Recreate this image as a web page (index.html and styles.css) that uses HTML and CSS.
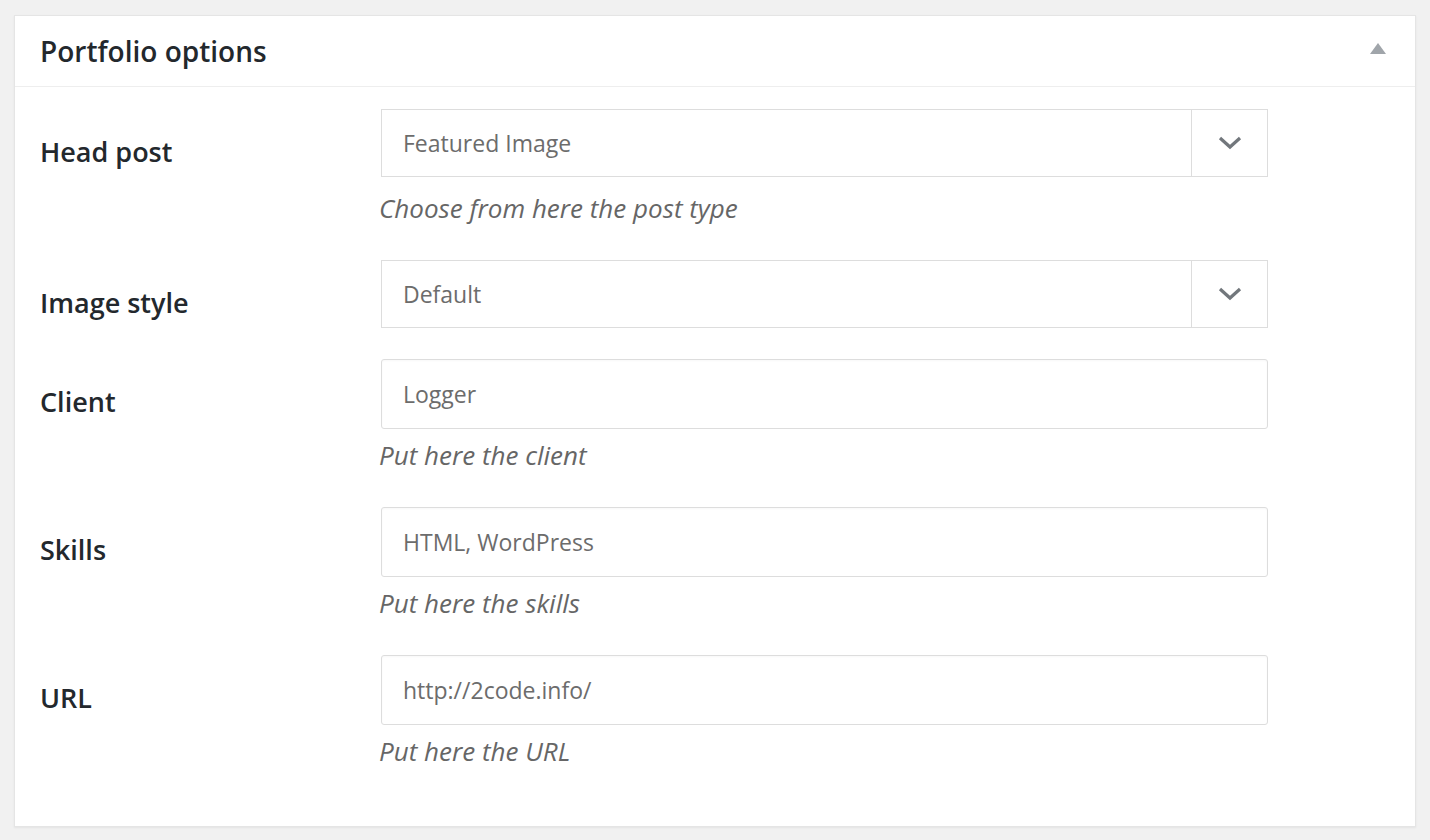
FILE: index.html
```html
<!DOCTYPE html>
<html>
<head>
<meta charset="utf-8">
<link rel="stylesheet" href="styles.css">
</head>
<body>
<div class="panel">
  <div class="panel-head">
    <h2 class="panel-title">Portfolio options</h2>
    <svg class="toggle" width="16" height="11" viewBox="0 0 16 11"><polygon points="8,0 16,11 0,11" fill="#a0a5aa"/></svg>
  </div>
  <div class="panel-body">
    <div class="row">
      <div class="label">Head post</div>
      <div class="field">
        <div class="select"><span class="value">Featured Image</span><span class="arrow"><svg width="24" height="14" viewBox="0 0 24 14"><polyline points="2,2 12,11 22,2" fill="none" stroke="#72777c" stroke-width="3.2"/></svg></span></div>
        <div class="help help-select">Choose from here the post type</div>
      </div>
    </div>
    <div class="row">
      <div class="label">Image style</div>
      <div class="field">
        <div class="select"><span class="value">Default</span><span class="arrow"><svg width="24" height="14" viewBox="0 0 24 14"><polyline points="2,2 12,11 22,2" fill="none" stroke="#72777c" stroke-width="3.2"/></svg></span></div>
      </div>
    </div>
    <div class="row">
      <div class="label">Client</div>
      <div class="field">
        <div class="input">Logger</div>
        <div class="help">Put here the client</div>
      </div>
    </div>
    <div class="row">
      <div class="label">Skills</div>
      <div class="field">
        <div class="input">HTML, WordPress</div>
        <div class="help">Put here the skills</div>
      </div>
    </div>
    <div class="row">
      <div class="label">URL</div>
      <div class="field">
        <div class="input">http://2code.info/</div>
        <div class="help">Put here the URL</div>
      </div>
    </div>
  </div>
</div>
</body>
</html>
```
FILE: styles.css
```css
html, body {
  margin: 0;
  padding: 0;
  background: #f1f1f1;
  font-family: "Open Sans", "Noto Sans", sans-serif;
}
body {
  padding: 15px 14px 15px 14px;
}
.panel {
  width: 1400px;
  background: #fff;
  border: 1px solid #e5e5e5;
  box-shadow: 0 1px 2px rgba(0,0,0,0.06);
}
.panel-head {
  height: 70px;
  border-bottom: 1px solid #eeeeee;
  display: flex;
  align-items: center;
  justify-content: space-between;
  padding: 0 29px 0 25px;
}
.panel-title {
  margin: 0;
  font-size: 28px;
  font-weight: 600;
  color: #23282d;
  line-height: 1;
}
.toggle {
  display: block;
  margin-top: -6px;
}
.panel-body {
  padding: 22px 0 54px 25px;
}
.row {
  display: grid;
  grid-template-columns: 341px 887px;
  margin-bottom: 31px;
}
.row:last-child {
  margin-bottom: 0;
}
.label {
  padding-top: 25px;
  font-size: 27px;
  line-height: 36px;
  font-weight: 600;
  color: #23282d;
}
.select {
  height: 66px;
  border: 1px solid #dddddd;
  display: flex;
  align-items: center;
  font-size: 23px;
  color: #6c6c6c;
}
.select .value {
  flex: 1;
  padding-left: 21px;
}
.select .arrow {
  width: 75px;
  height: 100%;
  border-left: 1px solid #dddddd;
  display: flex;
  align-items: center;
  justify-content: center;
}
.input {
  height: 68px;
  border: 1px solid #dddddd;
  border-radius: 3px;
  box-shadow: inset 0 1px 2px rgba(0,0,0,0.03);
  display: flex;
  align-items: center;
  padding-left: 21px;
  font-size: 23px;
  color: #6c6c6c;
}
.help {
  margin: 10px 0 5px -2px;
  font-size: 26px;
  line-height: 32px;
  font-style: italic;
  color: #666;
}
.help-select {
  margin-top: 15px;
}
```
